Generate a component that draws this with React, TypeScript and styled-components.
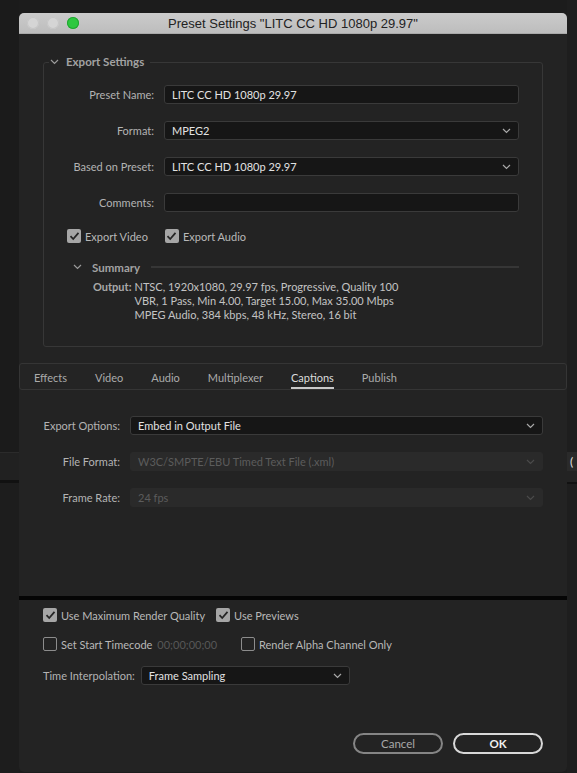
import React from 'react'
import styled, { createGlobalStyle } from 'styled-components'

const GlobalStyle = createGlobalStyle`
  html, body {
    margin:0;
    padding:0;
    background:#1c1c1c;
  }
  body {
    font-family: Lato, "Noto Sans", sans-serif;
    font-size:11px;
    -webkit-font-smoothing: antialiased;
  }
  * { box-sizing:border-box; }
`

const Page = styled.div`
  display:flex;
  width:577px;
  height:773px;
  overflow:hidden;
  background:#1c1c1c;
`

const Strip = styled.div<{ $w: number }>`
  width:${p => p.$w}px;
  flex-shrink:0;
  display:flex;
  flex-direction:column;
`

const Band = styled.div<{ $h?: number; $bg: string }>`
  height:${p => (p.$h ? `${p.$h}px` : 'auto')};
  flex:${p => (p.$h ? '0 0 auto' : '1')};
  background:${p => p.$bg};
  overflow:hidden;
  white-space:nowrap;
  color:#e0e0e0;
  font-size:12px;
  line-height:${p => (p.$h ? `${p.$h}px` : 'normal')};
  padding-left:3px;
`

const Window = styled.div`
  width:548px;
  flex-shrink:0;
  margin-top:13px;
  height:759px;
  background:#232323;
  border-radius:5px;
  overflow:hidden;
  display:flex;
  flex-direction:column;
`

const TitleBar = styled.div`
  height:21px;
  flex-shrink:0;
  display:grid;
  grid-template-columns:1fr auto 1fr;
  align-items:center;
  background:linear-gradient(#cbcbcb, #bdbdbd);
  border-bottom:1px solid #a9a9a9;
  padding:0 8px;
`

const Lights = styled.div`
  display:flex;
  gap:8px;
`

const Light = styled.span<{ $green?: boolean }>`
  width:12px;
  height:12px;
  border-radius:50%;
  background:${p => (p.$green ? '#2dc83f' : '#d5d5d5')};
  box-shadow:inset 0 0 0 1px ${p => (p.$green ? '#22a531' : '#c6c6c6')};
`

const Title = styled.div`
  font-family:"Liberation Sans", Arial, sans-serif;
  font-size:13px;
  color:#222;
  white-space:nowrap;
`

const TopSection = styled.div`
  padding:21px 24px 16px;
  flex-shrink:0;
`

const Group = styled.fieldset`
  margin:0;
  min-width:0;
  border:1px solid #373737;
  border-radius:3px;
  padding:16px 23px 24px 0;
`

const Legend = styled.legend`
  display:flex;
  align-items:center;
  gap:7px;
  height:14px;
  line-height:14px;
  margin-left:5px;
  padding:0 6px 0 1px;
  font-weight:700;
  font-size:11.5px;
  color:#a2a2a2;
`

const FormGrid = styled.div<{ $label: number }>`
  display:grid;
  grid-template-columns:${p => p.$label}px 1fr;
  column-gap:10px;
  row-gap:17px;
  align-items:center;
`

const Label = styled.div`
  text-align:right;
  color:#b3b3b3;
  white-space:nowrap;
  line-height:19px;
`

const Field = styled.div<{ $disabled?: boolean }>`
  height:19px;
  display:flex;
  align-items:center;
  justify-content:space-between;
  padding:0 7px 0 7px;
  background:${p => (p.$disabled ? '#2a2a2a' : '#161616')};
  border:1px solid ${p => (p.$disabled ? '#2a2a2a' : '#3a3a3a')};
  border-radius:3px;
  color:${p => (p.$disabled ? '#5c5c5c' : '#e2e2e2')};
  white-space:nowrap;
  overflow:hidden;
`

const CheckRow = styled.div<{ $gap: number; $pad?: number; $top?: number }>`
  display:flex;
  align-items:center;
  gap:${p => p.$gap}px;
  padding-left:${p => p.$pad ?? 0}px;
  margin-top:${p => p.$top ?? 0}px;
  height:14px;
`

const CheckItem = styled.label`
  display:flex;
  align-items:center;
  gap:4px;
  color:#b8b8b8;
  white-space:nowrap;
`

const Box = styled.span<{ $checked?: boolean }>`
  width:14px;
  height:14px;
  flex-shrink:0;
  border-radius:2px;
  display:flex;
  align-items:center;
  justify-content:center;
  background:${p => (p.$checked ? '#a6a6a6' : 'transparent')};
  border:${p => (p.$checked ? 'none' : '1.5px solid #8c8c8c')};
`

const SubHeader = styled.div`
  margin-top:17px;
  height:14px;
  display:flex;
  align-items:center;
  padding-left:29px;
  gap:10px;
  font-weight:700;
  font-size:11.5px;
  color:#a2a2a2;
`

const Rule = styled.div`
  flex:1;
  height:2px;
  background:#363636;
  margin-left:1px;
`

const Output = styled.div`
  margin-top:6px;
  padding-left:49px;
  display:grid;
  grid-template-columns:auto 1fr;
  column-gap:3px;
  line-height:14px;
  color:#c3c3c3;
  b {
    color:#a9a9a9;
  }
`

const Tabs = styled.div`
  height:27px;
  flex-shrink:0;
  display:flex;
  align-items:stretch;
  gap:28px;
  padding-left:14px;
  border:1px solid #353535;
  border-radius:3px;
  background:#242424;
`

const Tab = styled.div<{ $active?: boolean }>`
  display:flex;
  align-items:center;
  font-size:11px;
  color:${p => (p.$active ? '#dcdcdc' : '#ababab')};
  border-bottom:2px solid ${p => (p.$active ? '#c9c9c9' : 'transparent')};
  padding-top:4px;
`

const CaptionsPanel = styled.div`
  flex:1;
  padding:26px 24px 0 0;
`

const Divider = styled.div`
  height:4px;
  flex-shrink:0;
  background:#050505;
`

const BottomSection = styled.div`
  height:172px;
  flex-shrink:0;
  display:flex;
  flex-direction:column;
  padding:8px 24px 18px;
`

const Dim = styled.span`
  color:#575757;
  margin-left:1px;
`

const InlineField = styled.div`
  margin-top:15px;
  display:flex;
  align-items:center;
  gap:6px;
  color:#b3b3b3;
`

const Buttons = styled.div`
  margin-top:auto;
  display:flex;
  justify-content:flex-end;
  gap:10px;
`

const Button = styled.button<{ $primary?: boolean }>`
  width:90px;
  height:21px;
  border-radius:11px;
  background:transparent;
  border:2px solid ${p => (p.$primary ? '#d8d8d8' : '#858585')};
  color:${p => (p.$primary ? '#f0f0f0' : '#a9a9a9')};
  font-family:inherit;
  font-size:11.5px;
  font-weight:${p => (p.$primary ? 700 : 400)};
  padding:0;
`

function Chevron({ color = '#a8a8a8' }: { color?: string }) {
  return (
    <svg width="9" height="6" viewBox="0 0 9 6">
      <path d="M1 1 L4.5 4.5 L8 1" fill="none" stroke={color} strokeWidth="1.2" />
    </svg>
  )
}

function Check({ checked, children }: { checked?: boolean; children?: React.ReactNode }) {
  return (
    <CheckItem>
      <Box $checked={checked}>
        {checked && (
          <svg width="11" height="10" viewBox="0 0 11 10">
            <path d="M1.5 5.2 L4.2 8 L9.5 1.8" fill="none" stroke="#262626" strokeWidth="1.8" />
          </svg>
        )}
      </Box>
      {children}
    </CheckItem>
  )
}

const tabs = ['Effects', 'Video', 'Audio', 'Multiplexer', 'Captions', 'Publish']

export default function App() {
  return (
    <>
      <GlobalStyle />
      <Page>
        <Strip $w={19}>
          <Band $h={452} $bg="#1b1b1b" />
          <Band $h={1} $bg="#2b2b2b" />
          <Band $h={27} $bg="#212121" />
          <Band $h={3} $bg="#111" />
          <Band $bg="#1d1d1d" />
        </Strip>

        <Window>
          <TitleBar>
            <Lights>
              <Light />
              <Light />
              <Light $green />
            </Lights>
            <Title>Preset Settings "LITC CC HD 1080p 29.97"</Title>
            <span />
          </TitleBar>

          <TopSection>
            <Group>
              <Legend>
                <Chevron color="#9a9a9a" />
                Export Settings
              </Legend>
              <FormGrid $label={110}>
                <Label>Preset Name:</Label>
                <Field>LITC CC HD 1080p 29.97</Field>
                <Label>Format:</Label>
                <Field>
                  MPEG2
                  <Chevron />
                </Field>
                <Label>Based on Preset:</Label>
                <Field>
                  LITC CC HD 1080p 29.97
                  <Chevron />
                </Field>
                <Label>Comments:</Label>
                <Field />
              </FormGrid>

              <CheckRow $gap={17} $pad={23} $top={17}>
                <Check checked>Export Video</Check>
                <Check checked>Export Audio</Check>
              </CheckRow>

              <SubHeader>
                <Chevron color="#9a9a9a" />
                Summary
                <Rule />
              </SubHeader>

              <Output>
                <b>Output:</b>
                <div>
                  NTSC, 1920x1080, 29.97 fps, Progressive, Quality 100
                  <br />
                  VBR, 1 Pass, Min 4.00, Target 15.00, Max 35.00 Mbps
                  <br />
                  MPEG Audio, 384 kbps, 48 kHz, Stereo, 16 bit
                </div>
              </Output>
            </Group>
          </TopSection>

          <Tabs>
            {tabs.map(t => (
              <Tab key={t} $active={t === 'Captions'}>
                {t}
              </Tab>
            ))}
          </Tabs>

          <CaptionsPanel>
            <FormGrid $label={101}>
              <Label>Export Options:</Label>
              <Field>
                Embed in Output File
                <Chevron />
              </Field>
              <Label>File Format:</Label>
              <Field $disabled>
                W3C/SMPTE/EBU Timed Text File (.xml)
                <Chevron color="#4a4a4a" />
              </Field>
              <Label>Frame Rate:</Label>
              <Field $disabled>
                24 fps
                <Chevron color="#4a4a4a" />
              </Field>
            </FormGrid>
          </CaptionsPanel>

          <Divider />

          <BottomSection>
            <CheckRow $gap={11}>
              <Check checked>Use Maximum Render Quality</Check>
              <Check checked>Use Previews</Check>
            </CheckRow>
            <CheckRow $gap={24} $top={15}>
              <Check>
                Set Start Timecode <Dim>00;00;00;00</Dim>
              </Check>
              <Check>Render Alpha Channel Only</Check>
            </CheckRow>
            <InlineField>
              Time Interpolation:
              <Field style={{ width: 209 }}>
                Frame Sampling
                <Chevron />
              </Field>
            </InlineField>
            <Buttons>
              <Button>Cancel</Button>
              <Button $primary>OK</Button>
            </Buttons>
          </BottomSection>
        </Window>

        <Strip $w={10}>
          <Band $h={452} $bg="#1e1e1e" />
          <Band $h={19} $bg="#2a2a2a">(</Band>
          <Band $h={11} $bg="#232323" />
          <Band $h={2} $bg="#121212" />
          <Band $bg="#1e1e1e" />
        </Strip>
      </Page>
    </>
  )
}
